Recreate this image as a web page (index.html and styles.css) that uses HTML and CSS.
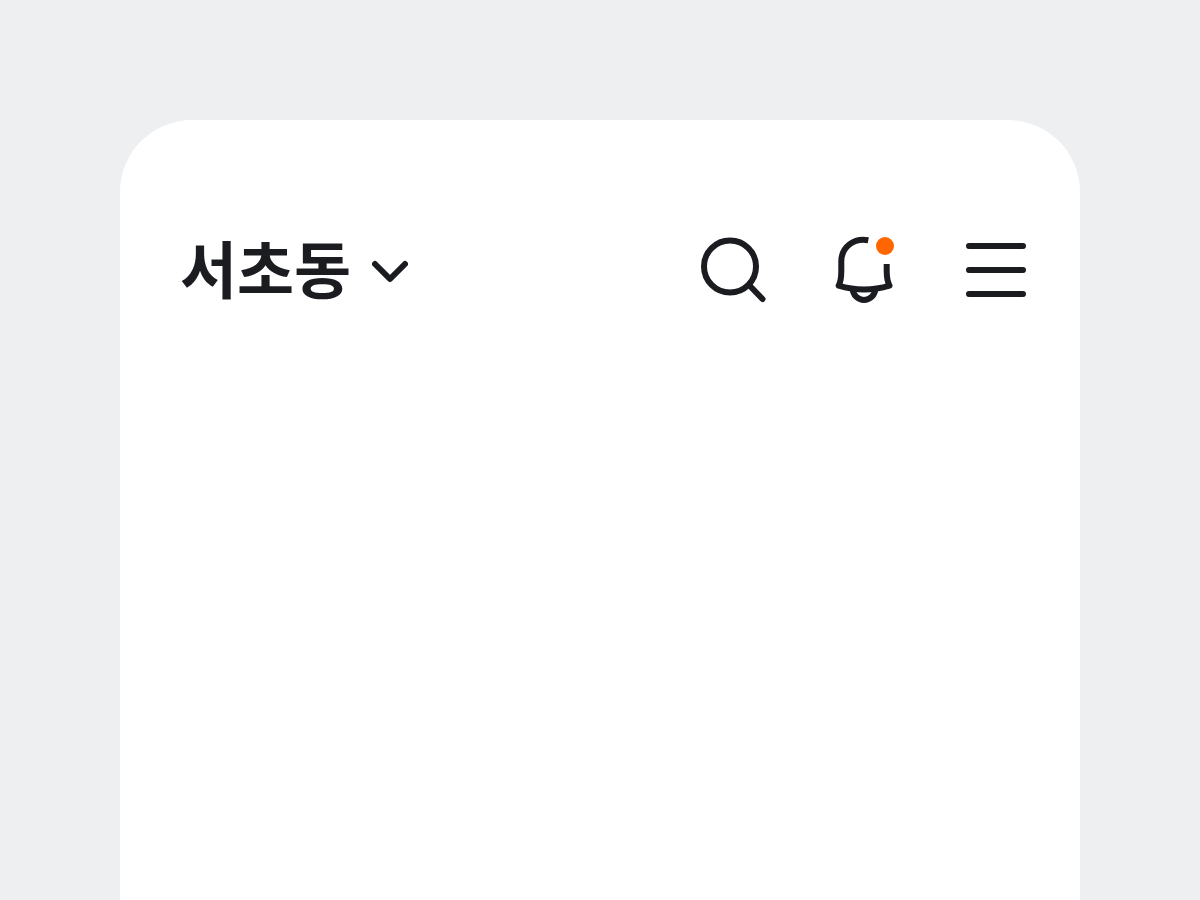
FILE: index.html
```html
<!DOCTYPE html>
<html lang="ko">
<head>
<meta charset="utf-8">
<meta name="viewport" content="width=device-width, initial-scale=1">
<title>서초동</title>
<link rel="stylesheet" href="styles.css">
</head>
<body>
<main class="screen">
  <header class="topbar">
    <button class="location" type="button" aria-haspopup="true">
      <span class="location-name">서초동</span>
      <svg class="chevron" viewBox="0 0 36 24" aria-hidden="true"><path d="M3 4 18 19 33 4"/></svg>
    </button>
    <nav class="actions" aria-label="메뉴">
      <button class="action" type="button" aria-label="검색">
        <svg class="icon" viewBox="0 0 72 72" aria-hidden="true"><circle cx="34" cy="32.500" r="26"/><path d="M53.500 51.500 66.500 65"/></svg>
      </button>
      <button class="action" type="button" aria-label="알림">
        <svg class="icon" viewBox="0 0 72 72" aria-hidden="true"><path class="butt" d="M40.300 6.200C26 3.500 13.300 13 13.300 27.500V37C13.300 43 12.800 47.500 10.700 51.700Q36 59.500 61.500 51.700C59.400 47.500 58.700 42 58.700 37V30"/><path class="butt" d="M24.800 54.800A11.200 11.200 0 0 0 47.200 54.800"/><circle class="dot" cx="57" cy="12" r="9"/></svg>
      </button>
      <button class="action" type="button" aria-label="전체 메뉴">
        <svg class="icon" viewBox="0 0 72 72" aria-hidden="true"><path d="M9 12H63M9 36H63M9 60H63"/></svg>
      </button>
    </nav>
  </header>
</main>
</body>
</html>
```
FILE: styles.css
```css
* { box-sizing: border-box; }
body { margin: 0; background: #edeff1; font-family: "Noto Sans CJK KR", sans-serif; color: #1a1c20; }
.screen { min-height: calc(100vh - 120px); margin: 120px 10% 0; background: #fff; border-radius: 72px 72px 0 0; }
.topbar { display: flex; align-items: center; justify-content: space-between; padding: 108px 48px 0 60px; }
button { padding: 0; border: 0; background: none; color: inherit; font: inherit; cursor: pointer; }
.location { display: flex; align-items: flex-start; gap: 21px; height: 84px; }
.location-name { font-size: 62px; font-weight: 700; line-height: 78px; }
svg { display: block; fill: none; stroke: currentColor; stroke-width: 6; stroke-linecap: round; stroke-linejoin: round; }
.chevron { width: 36px; height: 24px; margin-top: 32px; }
.actions { display: flex; gap: 60px; }
.icon { width: 72px; height: 72px; }
.butt { stroke-linecap: butt; }
.dot { fill: #ff6600; stroke: none; }
```
